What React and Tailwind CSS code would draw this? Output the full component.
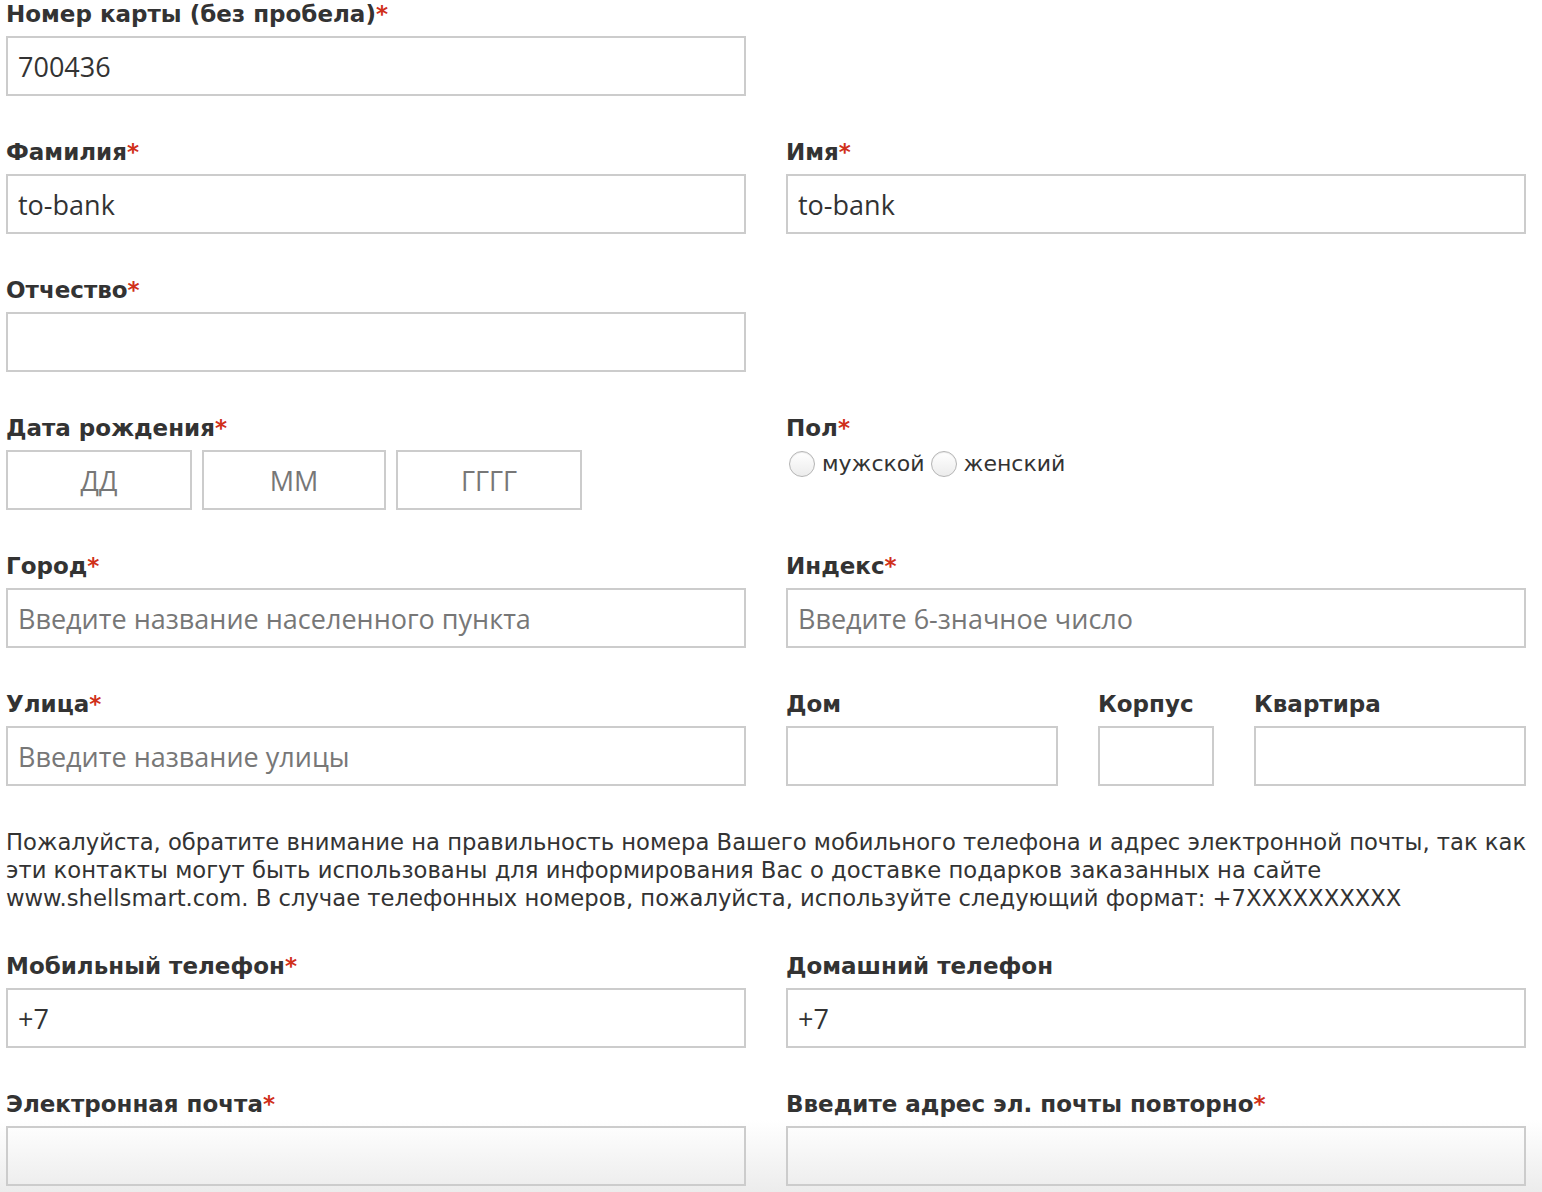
import React from "react";

const labelCls =
  "block text-[23px] leading-[28px] font-bold text-[#333] mb-2 font-['DejaVu_Sans',Verdana,sans-serif] whitespace-nowrap";
const inputCls =
  "block w-full h-[60px] border-2 border-[#cccccc] bg-transparent px-[10px] text-[27px] text-[#333] placeholder:text-[#777] outline-none font-['Open_Sans',sans-serif]";

function Label({ children, required }) {
  return (
    <label className={labelCls}>
      {children}
      {required && <span className="text-[#d0301a]">*</span>}
    </label>
  );
}

function Field({ label, required, value, placeholder, className = "" }) {
  return (
    <div className={"mb-[42px] " + className}>
      <Label required={required}>{label}</Label>
      <input
        className={inputCls}
        defaultValue={value}
        placeholder={placeholder}
      />
    </div>
  );
}

function Radio({ label }) {
  return (
    <label className="flex items-center gap-[7px] text-[22px] text-[#333] font-['DejaVu_Sans',Verdana,sans-serif]">
      <span className="w-[26px] h-[26px] rounded-full border border-[#b5b5b5] bg-gradient-to-b from-white to-[#ececec] shadow-[inset_0_1px_1px_rgba(0,0,0,0.08)]" />
      {label}
    </label>
  );
}

export default function App() {
  return (
    <div className="w-[1542px] min-h-[1192px] bg-[linear-gradient(to_bottom,#ffffff_1120px,#ececec_1192px)]">
      <div className="w-[1536px] pl-[6px] pt-0">
        <div className="grid grid-cols-[740px_740px] gap-x-[40px]">
          <Field label="Номер карты (без пробела)" required value="700436" />
          <div />

          <Field label="Фамилия" required value="to-bank" />
          <Field label="Имя" required value="to-bank" />

          <Field label="Отчество" required />
          <div />

          <div className="mb-[42px]">
            <Label required>Дата рождения</Label>
            <div className="flex gap-[10px]">
              {[
                ["ДД", "w-[186px]"],
                ["ММ", "w-[184px]"],
                ["ГГГГ", "w-[186px]"],
              ].map(([p, w]) => (
                <input
                  key={p}
                  placeholder={p}
                  className={
                    w +
                    " h-[60px] border-2 border-[#cccccc] text-center text-[27px] text-[#333] placeholder:text-[#777] outline-none font-['Open_Sans',sans-serif]"
                  }
                />
              ))}
            </div>
          </div>
          <div className="mb-[42px]">
            <label className="block text-[23px] leading-[28px] font-bold text-[#333] font-['DejaVu_Sans',Verdana,sans-serif]">
              Пол<span className="text-[#d0301a]">*</span>
            </label>
            <div className="flex items-center gap-[6px] mt-[5px] pl-[3px]">
              <Radio label="мужской" />
              <Radio label="женский" />
            </div>
          </div>

          <Field
            label="Город"
            required
            placeholder="Введите название населенного пункта"
          />
          <Field label="Индекс" required placeholder="Введите 6-значное число" />

          <Field label="Улица" required placeholder="Введите название улицы" />
          <div className="flex gap-[40px]">
            <Field label="Дом" className="w-[272px]" />
            <Field label="Корпус" className="w-[116px]" />
            <Field label="Квартира" className="w-[272px]" />
          </div>
        </div>

        <p className="text-[22.7px] leading-[28px] text-[#333] mb-[40px] font-['DejaVu_Sans',Verdana,sans-serif]">
          Пожалуйста, обратите внимание на правильность номера Вашего мобильного
          телефона и адрес электронной почты, так как эти контакты могут быть
          использованы для информирования Вас о доставке подарков заказанных на
          сайте www.shellsmart.com. В случае телефонных номеров, пожалуйста,
          используйте следующий формат: +7XXXXXXXXXX
        </p>

        <div className="grid grid-cols-[740px_740px] gap-x-[40px]">
          <Field label="Мобильный телефон" required value="+7" />
          <Field label="Домашний телефон" value="+7" />
          <Field label="Электронная почта" required />
          <Field label="Введите адрес эл. почты повторно" required />
        </div>
      </div>
    </div>
  );
}
